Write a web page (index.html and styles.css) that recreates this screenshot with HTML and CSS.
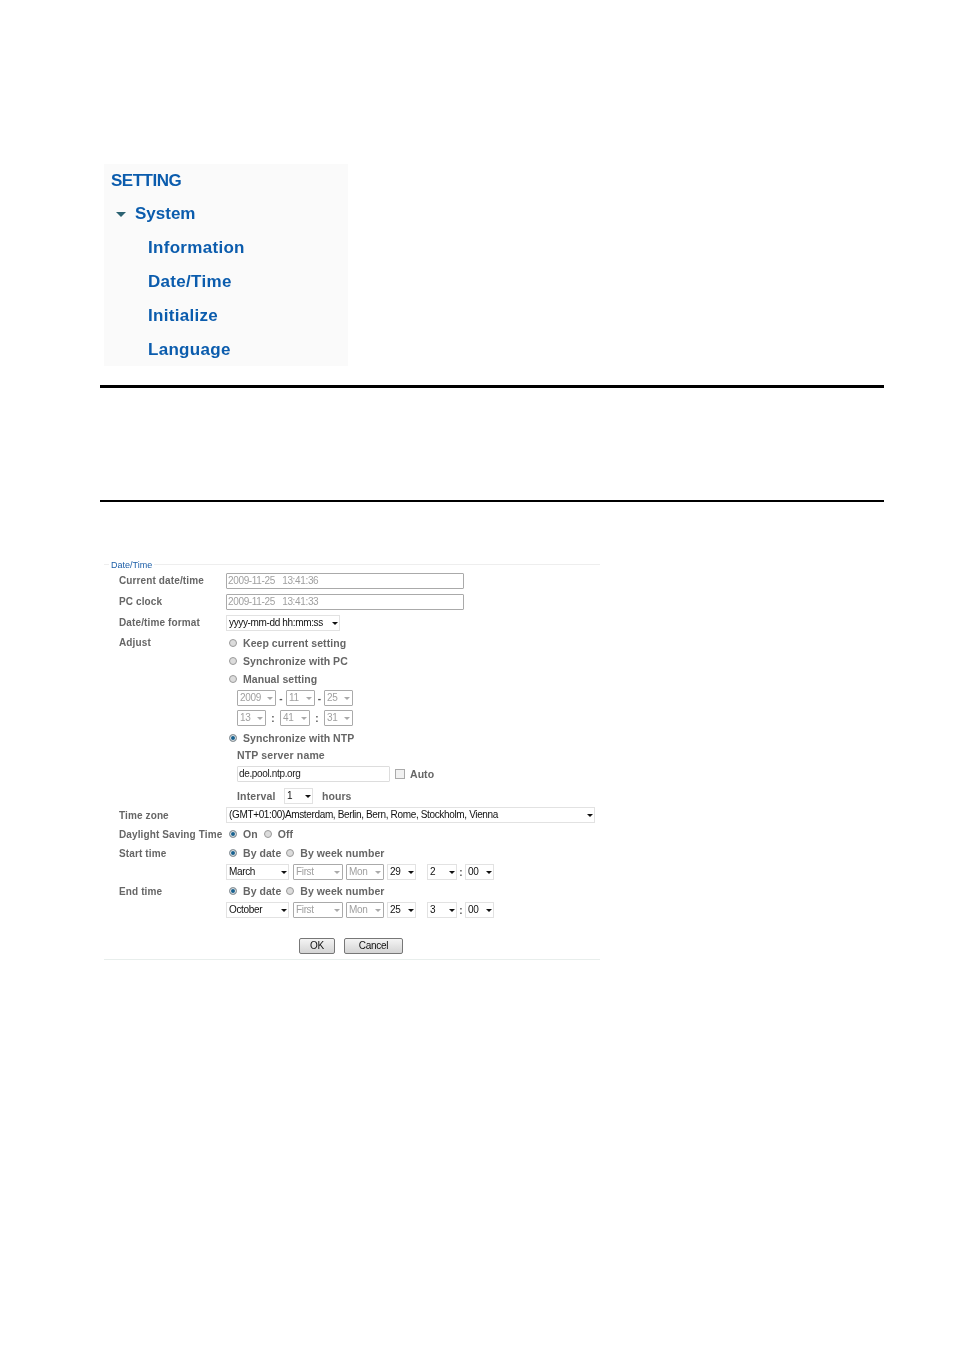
FILE: index.html
```html
<!DOCTYPE html>
<html lang="en">
<head>
<meta charset="utf-8">
<title>Date/Time</title>
<link rel="stylesheet" href="styles.css">
</head>
<body>
<main class="page">
  <nav class="menu">
    <div class="menu-row menu-title">SETTING</div>
    <div class="menu-row menu-group"><span class="tri"></span>System</div>
    <div class="menu-row menu-item">Information</div>
    <div class="menu-row menu-item">Date/Time</div>
    <div class="menu-row menu-item">Initialize</div>
    <div class="menu-row menu-item">Language</div>
  </nav>
  <div class="rule thick"></div>
  <div class="rule thin"></div>
  <fieldset class="panel">
    <legend>Date/Time</legend>
    <div class="row h21"><span class="lab">Current date/time</span><div class="val"><span class="input dis w238">2009-11-25 &nbsp; 13:41:36</span></div></div>
    <div class="row h21"><span class="lab">PC clock</span><div class="val"><span class="input dis w238">2009-11-25 &nbsp; 13:41:33</span></div></div>
    <div class="row h21"><span class="lab">Date/time format</span><div class="val"><span class="sel w114">yyyy-mm-dd hh:mm:ss</span></div></div>
    <div class="row h19"><span class="lab">Adjust</span><div class="val"><span class="radio"></span><span class="opt">Keep current setting</span></div></div>
    <div class="row h18"><div class="val"><span class="radio"></span><span class="opt">Synchronize with PC</span></div></div>
    <div class="row h18"><div class="val"><span class="radio"></span><span class="opt">Manual setting</span></div></div>
    <div class="row h20"><div class="val sub"><span class="sel dis w39">2009</span><span class="sep w10">-</span><span class="sel dis w29">11</span><span class="sep w9">-</span><span class="sel dis w29">25</span></div></div>
    <div class="row h20"><div class="val sub"><span class="sel dis w29">13</span><span class="sep w14">:</span><span class="sel dis w30">41</span><span class="sep w14">:</span><span class="sel dis w29">31</span></div></div>
    <div class="row h19"><div class="val"><span class="radio on"></span><span class="opt">Synchronize with NTP</span></div></div>
    <div class="row h16"><div class="val sub"><span class="opt flush">NTP server name</span></div></div>
    <div class="row h22"><div class="val sub"><span class="input w153">de.pool.ntp.org</span><span class="check"></span><span class="opt">Auto</span></div></div>
    <div class="row h21"><div class="val sub"><span class="opt flush w47">Interval</span><span class="sel w29">1</span><span class="opt hrs">hours</span></div></div>
    <div class="row h18"><span class="lab">Time zone</span><div class="val"><span class="sel w369">(GMT+01:00)Amsterdam, Berlin, Bern, Rome, Stockholm, Vienna</span></div></div>
    <div class="row h20"><span class="lab">Daylight Saving Time</span><div class="val"><span class="radio on"></span><span class="opt">On</span><span class="radio gap6"></span><span class="opt">Off</span></div></div>
    <div class="row h18"><span class="lab">Start time</span><div class="val"><span class="radio on"></span><span class="opt">By date</span><span class="radio gap5"></span><span class="opt">By week number</span></div></div>
    <div class="row h20"><div class="val"><span class="sel w63">March</span><span class="sel dis w50 ml4">First</span><span class="sel dis w38 ml3">Mon</span><span class="sel w29 ml3">29</span><span class="sel w30 ml11">2</span><span class="sep w8">:</span><span class="sel w29">00</span></div></div>
    <div class="row h18"><span class="lab">End time</span><div class="val"><span class="radio on"></span><span class="opt">By date</span><span class="radio gap5"></span><span class="opt">By week number</span></div></div>
    <div class="row h20"><div class="val"><span class="sel w63">October</span><span class="sel dis w50 ml4">First</span><span class="sel dis w38 ml3">Mon</span><span class="sel w29 ml3">25</span><span class="sel w30 ml11">3</span><span class="sep w8">:</span><span class="sel w29">00</span></div></div>
    <div class="actions"><button class="btn ok" type="button">OK</button><button class="btn cancel" type="button">Cancel</button></div>
  </fieldset>
</main>
</body>
</html>
```
FILE: styles.css
```css
* { box-sizing: border-box; }
html, body { margin: 0; padding: 0; background: #fff; }
body { font-family: "Liberation Sans", Arial, sans-serif; }
.page { width: 954px; height: 1350px; padding: 164px 70px 0 100px; overflow: hidden; }

.menu { width: 244px; height: 202px; margin-left: 4px; background: #fafafa; color: #0b5cad; font-size: 17px; font-weight: 700; overflow: hidden; filter: blur(.3px); }
.menu-row { display: flex; align-items: center; height: 34px; }
.menu-title { height: 33px; padding-left: 7px; letter-spacing: -.5px; }
.menu-group { padding-left: 12px; }
.menu-item { padding-left: 44px; letter-spacing: .3px; }
.tri { width: 0; height: 0; margin-right: 9px; border-left: 5px solid transparent; border-right: 5px solid transparent; border-top: 5px solid #2c6272; }

.rule { width: 784px; background: #000; }
.thick { height: 3px; margin-top: 19px; }
.thin { height: 2px; margin-top: 112px; }

.panel { width: 496px; height: 401px; margin: 57px 0 0 4px; padding: 0 0 0 15px; border: 0; border-top: 1px solid #eee; border-bottom: 1px solid #e8eeec; filter: blur(.3px); }
legend { margin-left: -10px; padding: 0 2px; color: #1d5fa8; font-size: 9px; line-height: 13px; height: 11px; }

.row { display: grid; grid-template-columns: 107px 1fr; align-items: center; }
.h16 { height: 16px; } .h18 { height: 18px; } .h19 { height: 19px; } .h20 { height: 20px; } .h21 { height: 21px; } .h22 { height: 22px; }
.lab { grid-column: 1; color: #666; font-size: 10px; font-weight: 700; letter-spacing: .12px; white-space: nowrap; }
.val { grid-column: 2; display: flex; align-items: center; min-width: 0; }
.sub { padding-left: 11px; }

.opt { color: #666; font-size: 10.5px; font-weight: 700; letter-spacing: .05px; white-space: nowrap; }
.flush { letter-spacing: .15px; }
.hrs { margin-left: 9px; }
.w47 { width: 47px; }

.radio { flex: none; width: 8px; height: 8px; margin: 0 6px 0 3px; border: 1px solid #999; border-radius: 50%; background: #dcdcdc; }
.radio.on { background: #17618f; box-shadow: inset 0 0 0 1px #e8e8e8; }
.radio.gap6 { margin-left: 6px; }
.radio.gap5 { margin-left: 5px; }
.check { flex: none; width: 10px; height: 10px; margin: 0 5px; border: 1px solid #aaa; background: #f1f1f1; }

.input { display: flex; align-items: center; height: 16px; padding: 0 0 1px 1px; border: 1px solid #aaa; border-radius: 1px; color: #222; font-size: 10px; letter-spacing: -.35px; white-space: nowrap; }
.input.dis { color: #a0a0a0; }
.input.w153 { border-color: #ddd; }

.sel { position: relative; display: flex; flex: none; align-items: center; height: 16px; padding: 0 0 1px 2px; border: 1px solid #e2e2e2; color: #111; font-size: 10px; letter-spacing: -.35px; white-space: nowrap; }
.sel::after { content: ""; position: absolute; right: 1px; top: 6px; border-left: 3px solid transparent; border-right: 3px solid transparent; border-top: 3px solid #111; }
.sel.dis { border-color: #aaa; border-radius: 1px; color: #a0a0a0; }
.sel.dis::after { right: 2px; border-top-color: #aaa; }
.sep { flex: none; color: #555; font-size: 10px; font-weight: 700; text-align: center; }

.w29 { width: 29px; } .w30 { width: 30px; } .w38 { width: 38px; } .w39 { width: 39px; } .w50 { width: 50px; } .w63 { width: 63px; }
.w114 { width: 114px; } .w153 { width: 153px; } .w238 { width: 238px; } .w369 { width: 369px; }
.w8 { width: 8px; } .w9 { width: 9px; } .w10 { width: 10px; } .w14 { width: 14px; }
.ml3 { margin-left: 3px; } .ml4 { margin-left: 4px; } .ml11 { margin-left: 11px; }

.actions { display: flex; gap: 9px; margin-top: 18px; padding-left: 180px; }
.btn { height: 16px; padding: 0 0 1px; border: 1px solid #777; border-radius: 2px; background: linear-gradient(#f4f4f4, #d4d4d4); color: #111; font: 10px "Liberation Sans", Arial, sans-serif; letter-spacing: -.3px; }
.ok { width: 36px; }
.cancel { width: 59px; }
```
